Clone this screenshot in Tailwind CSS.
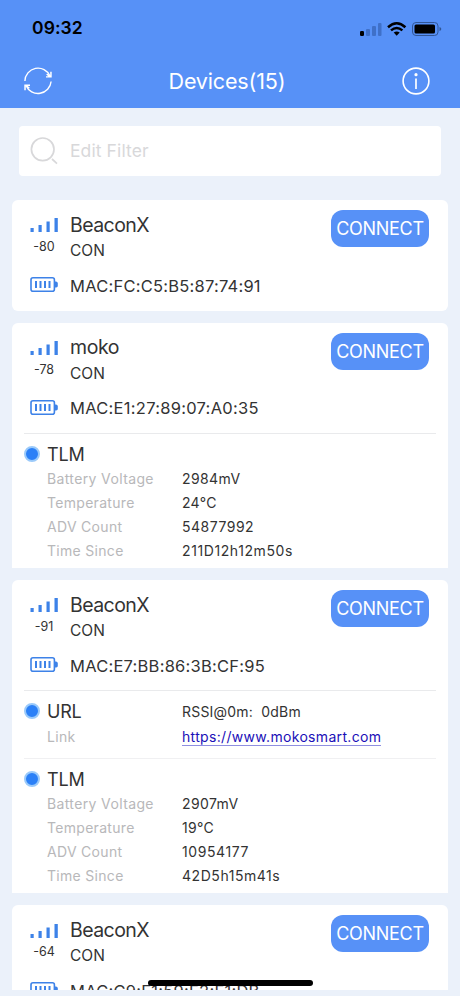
<!DOCTYPE html>
<html lang="en">
<head>
<meta charset="utf-8">
<title>Devices</title>
<script src="https://cdn.jsdelivr.net/npm/@tailwindcss/browser@4"></script>
</head>
<body class="font-['Inter',sans-serif] bg-[#ebf1fa] text-[#333333]">
<svg class="hidden">
  <symbol id="signal" viewBox="0 0 28 15"><path fill="#3d82e8" d="M0.500 11h3.200v4H.5zM8.500 8h3.200v7H8.500zM16.500 4.500h3.200v10.500H16.500zM24.500 1h3.300v14H24.500z"/></symbol>
  <symbol id="battery" viewBox="0 0 28 15"><rect x="1" y=".8" width="23.400" height="13.400" rx="2" fill="none" stroke="#3d82e8" stroke-width="1.600"/><path fill="#3d82e8" d="M25 4.500h1.200q1.600.6 1.600 1.600v2.800q0 1-1.600 1.600H25zM5 4h2v7H5zM9.500 4h2v7h-2zM14 4h2v7h-2zM18.500 4h2v7h-2z"/></symbol>
</svg>
<div class="relative w-[460px] h-[996px] overflow-hidden flex flex-col">
  <header class="h-[108px] shrink-0 bg-[#5791f7] flex flex-col">
    <div class="h-[54px] pl-[32px] pr-[18px] pt-[3px] flex items-center justify-between text-black">
      <span class="text-[17.500px] font-semibold tracking-[0.1px]">09:32</span>
      <svg class="w-[83px] h-[16px]" viewBox="0 0 83 16">
        <rect x="1" y="10" width="4" height="5" rx="1.200"/>
        <g fill="#3f70c8"><rect x="7" y="8" width="4" height="7" rx="1"/><rect x="13" y="5" width="4" height="10" rx="1"/><rect x="19" y="2" width="3.500" height="13" rx="1"/></g>
        <g fill="none" stroke="#000" stroke-width="2.500"><path d="M29 6.200Q37.700-1.600 46.400 6.200"/><path d="M32 9.400q5.700-4.800 11.400 0"/></g>
        <path d="M34.700 11.500q3-2.200 6 0l-3 3.300z"/>
        <rect x="53.500" y="1.500" width="25.500" height="13" rx="3.500" fill="none" stroke="#315696" stroke-width="1"/>
        <rect x="55.500" y="3.500" width="20.500" height="9" rx="1.500"/>
        <path d="M80.500 6q1.800.5 1.800 2t-1.800 2z" fill="#315696"/>
      </svg>
    </div>
    <div class="h-[54px] pl-[24px] pr-[30px] flex items-center justify-between text-white">
      <svg class="w-[28px] h-[28px]" viewBox="0 0 28 28" fill="none" stroke="#fff" stroke-width="1.400">
        <path d="M.9 14A13.100 13.100 0 0 1 26 9M27.100 14.500A13.100 13.100 0 0 1 2 18.500"/>
        <path fill="#fff" stroke="none" d="M27.700 4.800v5.700h-5.700v-1.300h2.200l-2-1.800 1-1 3 2.200V4.800zM.3 23.300v-5.700H6v1.300H3.800l2 1.800-1 1-3-2.200v3.800z"/>
      </svg>
      <h1 class="text-[21.500px] leading-[28px] tracking-[-0.150px]">Devices(15)</h1>
      <svg class="w-[28px] h-[28px]" viewBox="0 0 28 28"><circle cx="14" cy="14" r="12.900" fill="none" stroke="#fff" stroke-width="1.600"/><circle cx="14" cy="7.700" r="1.600" fill="#fff"/><path d="M14 11.500v10.500" stroke="#fff" stroke-width="1.700"/></svg>
    </div>
  </header>

  <div class="mt-[18px] mx-[19px] h-[50px] shrink-0 rounded-[4px] bg-white flex items-center pl-[11px]">
    <svg class="w-[29px] h-[28px]" viewBox="0 0 29 28" fill="none" stroke="#d8d8da" stroke-width="1.700"><circle cx="12.700" cy="12.300" r="11.300"/><path d="M22 22l5 4.600"/></svg>
    <span class="ml-[11px] mt-px text-[17.500px] tracking-[0.100px] text-[#d8d8da]">Edit Filter</span>
  </div>

  <main class="mt-[24px] mx-[12px] h-[790px] overflow-hidden flex flex-col gap-[12px]">
    <article class="h-[111px] shrink-0 rounded-[6px] bg-white">
      <div class="h-[110px] flex">
        <div class="w-[64px] px-[6px] flex flex-col items-center shrink-0">
          <svg class="mt-[17px] w-[28px] h-[15px]"><use href="#signal"/></svg>
          <span class="mt-[7px] h-[16px] leading-[16px] text-[12.500px]">-80</span>
          <svg class="mt-[22px] w-[28px] h-[15px]"><use href="#battery"/></svg>
        </div>
        <div class="-ml-[6px] flex-1 whitespace-nowrap">
          <h2 class="mt-[12px] h-[26px] leading-[26px] text-[19.500px] tracking-[-0.550px]">BeaconX</h2>
          <p class="h-[26px] leading-[26px] text-[15.500px]">CON</p>
          <p class="mt-[9px] h-[26px] leading-[26px] text-[16.500px] tracking-[0.230px]">MAC:FC:C5:B5:87:74:91</p>
        </div>
        <button class="mt-[10px] mr-[19px] w-[98px] h-[37px] rounded-[12px] bg-[#5791f7] text-white text-[18px] tracking-[-0.300px]">CONNECT</button>
      </div>
    </article>

    <article class="h-[245px] shrink-0 rounded-t-[6px] bg-white">
      <div class="h-[110px] flex">
        <div class="w-[64px] px-[6px] flex flex-col items-center shrink-0">
          <svg class="mt-[17px] w-[28px] h-[15px]"><use href="#signal"/></svg>
          <span class="mt-[7px] h-[16px] leading-[16px] text-[12.500px]">-78</span>
          <svg class="mt-[22px] w-[28px] h-[15px]"><use href="#battery"/></svg>
        </div>
        <div class="-ml-[6px] flex-1 whitespace-nowrap">
          <h2 class="mt-[11px] h-[26px] leading-[26px] text-[19.500px] tracking-[-0.400px]">moko</h2>
          <p class="mt-px h-[26px] leading-[26px] text-[15.500px]">CON</p>
          <p class="mt-[8px] h-[26px] leading-[26px] text-[16.500px] tracking-[0.270px]">MAC:E1:27:89:07:A0:35</p>
        </div>
        <button class="mt-[10px] mr-[19px] w-[98px] h-[37px] rounded-[12px] bg-[#5791f7] text-white text-[18px] tracking-[-0.300px]">CONNECT</button>
      </div>
      <section class="mx-[12px] border-t border-[#e9eaec] pt-[7px]">
        <div class="h-[26px] flex items-center">
          <i class="w-[16px] h-[16px] rounded-full bg-[#2b80f7] border-[2.500px] border-[#9bcafa]"></i>
          <h3 class="ml-[7px] text-[18px] tracking-[-0.200px]">TLM</h3>
        </div>
        <dl class="pl-[23px] grid grid-cols-[135px_1fr] auto-rows-[23.750px] items-center text-[14px] whitespace-nowrap">
          <dt class="text-[#b8b8ba] tracking-[0.370px]">Battery Voltage</dt><dd class="tracking-[0.400px]">2984mV</dd>
          <dt class="text-[#b8b8ba] tracking-[0.300px]">Temperature</dt><dd class="tracking-[0.300px]">24°C</dd>
          <dt class="text-[#b8b8ba] tracking-[0.300px]">ADV Count</dt><dd class="tracking-[0.500px]">54877992</dd>
          <dt class="text-[#b8b8ba] tracking-[0.300px]">Time Since</dt><dd class="tracking-[0.600px]">211D12h12m50s</dd>
        </dl>
      </section>
    </article>

    <article class="h-[313px] shrink-0 rounded-t-[6px] bg-white">
      <div class="h-[110px] flex">
        <div class="w-[64px] px-[6px] flex flex-col items-center shrink-0">
          <svg class="mt-[17px] w-[28px] h-[15px]"><use href="#signal"/></svg>
          <span class="mt-[7px] h-[16px] leading-[16px] text-[12.500px]">-91</span>
          <svg class="mt-[22px] w-[28px] h-[15px]"><use href="#battery"/></svg>
        </div>
        <div class="-ml-[6px] flex-1 whitespace-nowrap">
          <h2 class="mt-[12px] h-[26px] leading-[26px] text-[19.500px] tracking-[-0.550px]">BeaconX</h2>
          <p class="h-[26px] leading-[26px] text-[15.500px]">CON</p>
          <p class="mt-[9px] h-[26px] leading-[26px] text-[16.500px] tracking-[0.230px]">MAC:E7:BB:86:3B:CF:95</p>
        </div>
        <button class="mt-[10px] mr-[19px] w-[98px] h-[37px] rounded-[12px] bg-[#5791f7] text-white text-[18px] tracking-[-0.300px]">CONNECT</button>
      </div>
      <section class="mx-[12px] border-t border-[#e9eaec] pt-[7px] h-[68px]">
        <div class="h-[26.400px] flex items-center">
          <i class="w-[16px] h-[16px] rounded-full bg-[#2b80f7] border-[2.500px] border-[#9bcafa]"></i>
          <h3 class="ml-[7px] w-[135px] text-[18px] tracking-[-0.200px]">URL</h3>
          <span class="text-[14px] tracking-[0.200px] whitespace-pre">RSSI@0m:  0dBm</span>
        </div>
        <div class="pl-[23px] h-[25px] flex items-center text-[14px]">
          <span class="w-[135px] text-[#b8b8ba] tracking-[0.300px]">Link</span>
          <a class="h-[18px] leading-[17px] border-b border-[#8f8fe0] text-[#1a10b8] tracking-[0.320px]">https://www.mokosmart.com</a>
        </div>
      </section>
      <section class="mx-[12px] border-t border-[#f0f0f2] pt-[7px]">
        <div class="h-[26px] flex items-center">
          <i class="w-[16px] h-[16px] rounded-full bg-[#2b80f7] border-[2.500px] border-[#9bcafa]"></i>
          <h3 class="ml-[7px] text-[18px] tracking-[-0.200px]">TLM</h3>
        </div>
        <dl class="pl-[23px] grid grid-cols-[135px_1fr] auto-rows-[23.750px] items-center text-[14px] whitespace-nowrap">
          <dt class="text-[#b8b8ba] tracking-[0.370px]">Battery Voltage</dt><dd class="tracking-[0.400px]">2907mV</dd>
          <dt class="text-[#b8b8ba] tracking-[0.300px]">Temperature</dt><dd class="tracking-[0.300px]">19°C</dd>
          <dt class="text-[#b8b8ba] tracking-[0.300px]">ADV Count</dt><dd class="tracking-[0.600px]">10954177</dd>
          <dt class="text-[#b8b8ba] tracking-[0.300px]">Time Since</dt><dd class="tracking-[0.550px]">42D5h15m41s</dd>
        </dl>
      </section>
    </article>

    <article class="h-[111px] shrink-0 rounded-t-[6px] bg-white">
      <div class="h-[110px] flex">
        <div class="w-[64px] px-[6px] flex flex-col items-center shrink-0">
          <svg class="mt-[18px] w-[28px] h-[15px]"><use href="#signal"/></svg>
          <span class="mt-[6px] h-[16px] leading-[16px] text-[12.500px]">-64</span>
          <svg class="mt-[22px] w-[28px] h-[15px]"><use href="#battery"/></svg>
        </div>
        <div class="-ml-[6px] flex-1 whitespace-nowrap">
          <h2 class="mt-[12px] h-[26px] leading-[26px] text-[19.500px] tracking-[-0.550px]">BeaconX</h2>
          <p class="h-[26px] leading-[26px] text-[15.500px]">CON</p>
          <p class="mt-[9px] h-[26px] leading-[26px] text-[16.500px] tracking-[0.230px]">MAC:C9:E1:59:E2:E1:DB</p>
        </div>
        <button class="mt-[10px] mr-[19px] w-[98px] h-[37px] rounded-[12px] bg-[#5791f7] text-white text-[18px] tracking-[-0.300px]">CONNECT</button>
      </div>
    </article>
  </main>
  <div class="absolute left-[148px] top-[980px] w-[165px] h-[6px] rounded-full bg-black"></div>
</div>
</body>
</html>
